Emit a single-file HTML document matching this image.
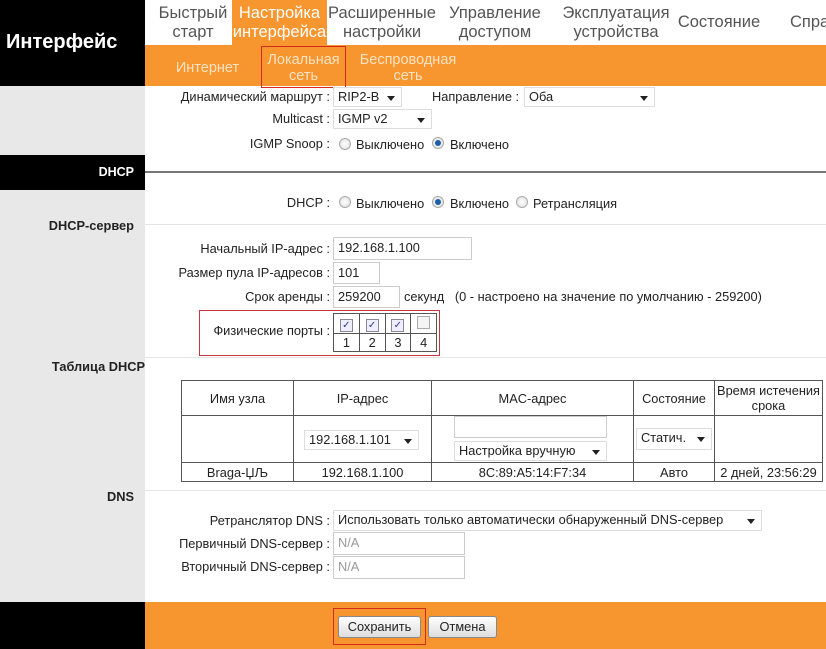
<!DOCTYPE html>
<html><head><meta charset="utf-8"><style>
*{margin:0;padding:0;box-sizing:border-box}
body{width:826px;height:649px;position:relative;overflow:hidden;background:#fff;font-family:"Liberation Sans",Arial,sans-serif;font-size:12.8px;color:#222}
.a{position:absolute}
.lbl{position:absolute;text-align:right;white-space:nowrap;line-height:14px}
.sel{position:absolute;border:1px solid #ddd;background:#fff;padding-left:4px;line-height:18px;font-size:12.8px;white-space:nowrap}
.sel:after{content:"";position:absolute;right:6px;top:8px;border-left:4px solid transparent;border-right:4px solid transparent;border-top:5px solid #222}
.inp{position:absolute;border:1px solid #ccc;background:#fff;padding-left:4px;line-height:20px;font-size:12.8px}
.rad{position:absolute;width:12px;height:12px;border-radius:50%;border:1px solid #aaa;background:radial-gradient(#fff,#ddd)}
.rad.on:after{content:"";position:absolute;left:2px;top:2px;width:6px;height:6px;border-radius:50%;background:#1a5fa8}
.nav{position:absolute;top:4px;text-align:center;font-size:16.5px;line-height:19px;color:#555;white-space:nowrap}
.sub{position:absolute;text-align:center;font-size:14.5px;line-height:16px;color:#fde3c4;white-space:nowrap}
table{border-collapse:collapse}
td{border:1px solid #555;text-align:center;font-size:12.8px}
.cb{display:inline-block;width:13px;height:13px;border:1px solid #889;background:#eef;font-size:10px;line-height:11px;color:#339}
</style></head><body>
<div class="a" style="left:0;top:0;width:145px;height:649px;background:#e8e8e8"></div>
<div class="a" style="left:0;top:0;width:145px;height:86px;background:#000"></div>
<div class="a" style="left:6px;top:31px;color:#fff;font-weight:bold;font-size:20px">Интерфейс</div>
<div class="a" style="left:0;top:155px;width:145px;height:35px;background:#000"></div>
<div class="a" style="left:0;top:165px;width:134px;text-align:right;color:#fff;font-weight:bold;font-size:12.5px">DHCP</div>
<div class="a" style="left:0;top:218px;width:134px;text-align:right;font-weight:bold">DHCP-сервер</div>
<div class="a" style="left:0;top:359px;width:145px;text-align:right;font-weight:bold">Таблица DHCP</div>
<div class="a" style="left:0;top:489px;width:134px;text-align:right;font-weight:bold">DNS</div>
<div class="a" style="left:0;top:602px;width:145px;height:47px;background:#000"></div>
<div class="a" style="left:145px;top:602px;width:681px;height:47px;background:#f7962f"></div>

<div class="a" style="left:145px;top:45px;width:681px;height:41px;background:#f7962f"></div>
<div class="a" style="left:232px;top:0;width:95px;height:45px;background:#f7962f"></div>
<div class="nav" style="left:155px;width:76px">Быстрый<br>старт</div>
<div class="nav" style="left:232px;width:95px;color:#fff">Настройка<br>интерфейса</div>
<div class="nav" style="left:327px;width:110px">Расширенные<br>настройки</div>
<div class="nav" style="left:445px;width:100px">Управление<br>доступом</div>
<div class="nav" style="left:560px;width:112px">Эксплуатация<br>устройства</div>
<div class="nav" style="left:676px;width:86px;top:13px">Состояние</div>
<div class="nav" style="left:790px;width:60px;top:13px;text-align:left">Справка</div>
<div class="sub" style="left:170px;width:75px;top:60px">Интернет</div>
<div class="sub" style="left:261px;width:85px;top:52px">Локальная<br>сеть</div>
<div class="a" style="left:261px;top:46px;width:85px;height:42px;border:1px solid #d42a1a"></div>
<div class="sub" style="left:358px;width:100px;top:52px">Беспроводная<br>сеть</div>

<div class="lbl" style="right:496px;top:90px">Динамический маршрут :</div>
<div class="sel" style="left:333px;top:87px;width:69px;height:20px">RIP2-B</div>
<div class="lbl" style="left:432px;top:90px">Направление :</div>
<div class="sel" style="left:524px;top:87px;width:131px;height:20px">Оба</div>
<div class="lbl" style="right:496px;top:112px">Multicast :</div>
<div class="sel" style="left:333px;top:109px;width:99px;height:20px">IGMP v2</div>
<div class="lbl" style="right:496px;top:137px">IGMP Snoop :</div>
<div class="rad" style="left:339px;top:138px"></div><div class="lbl" style="left:356px;top:138px">Выключено</div>
<div class="rad on" style="left:432px;top:137px"></div><div class="lbl" style="left:450px;top:138px">Включено</div>
<div class="a" style="left:145px;top:171px;width:681px;height:2px;background:#777"></div>

<div class="lbl" style="right:496px;top:196px">DHCP :</div>
<div class="rad" style="left:339px;top:196px"></div><div class="lbl" style="left:356px;top:197px">Выключено</div>
<div class="rad on" style="left:432px;top:196px"></div><div class="lbl" style="left:450px;top:197px">Включено</div>
<div class="rad" style="left:516px;top:196px"></div><div class="lbl" style="left:533px;top:197px">Ретрансляция</div>
<div class="a" style="left:145px;top:224px;width:681px;height:1px;background:#e4e4e4"></div>

<div class="lbl" style="right:496px;top:242px">Начальный IP-адрес :</div>
<div class="inp" style="left:333px;top:237px;width:139px;height:23px">192.168.1.100</div>
<div class="lbl" style="right:496px;top:266px">Размер пула IP-адресов :</div>
<div class="inp" style="left:333px;top:262px;width:47px;height:22px">101</div>
<div class="lbl" style="right:496px;top:290px">Срок аренды :</div>
<div class="inp" style="left:333px;top:286px;width:67px;height:22px">259200</div>
<div class="lbl" style="left:404px;top:290px">секунд &nbsp;&nbsp;(0 - настроено на значение по умолчанию - 259200)</div>
<div class="a" style="left:199px;top:310px;width:241px;height:46px;border:1px solid #c9353f"></div>
<div class="lbl" style="right:496px;top:324px">Физические порты :</div>
<table class="a" style="left:333px;top:313px;width:104px">
<tr style="height:20px"><td><span class="cb">✓</span></td><td><span class="cb">✓</span></td><td><span class="cb">✓</span></td><td><span class="cb" style="background:#f4f4f4;border-color:#aaa"></span></td></tr>
<tr style="height:18px"><td>1</td><td>2</td><td>3</td><td>4</td></tr></table>
<div class="a" style="left:145px;top:357px;width:681px;height:1px;background:#e4e4e4"></div>

<table class="a" style="left:181px;top:380px;width:642px">
<tr style="height:35px"><td style="width:112px">Имя узла</td><td style="width:138px">IP-адрес</td><td style="width:202px">MAC-адрес</td><td style="width:81px">Состояние</td><td style="line-height:15px">Время истечения срока</td></tr>
<tr style="height:47px"><td></td><td style="position:relative"><div class="sel" style="left:10px;top:14px;width:115px;height:20px;text-align:left">192.168.1.101</div></td>
<td style="position:relative"><div class="inp" style="left:22px;top:0px;width:153px;height:22px"></div><div class="sel" style="left:22px;top:25px;width:153px;height:20px;text-align:left">Настройка вручную</div></td>
<td style="position:relative"><div class="sel" style="left:2px;top:12px;width:76px;height:22px;text-align:left">Статич.</div></td><td></td></tr>
<tr style="height:19px"><td>Braga-ЏЉ</td><td>192.168.1.100</td><td>8C:89:A5:14:F7:34</td><td>Авто</td><td>2 дней, 23:56:29</td></tr></table>
<div class="a" style="left:145px;top:490px;width:681px;height:1px;background:#e4e4e4"></div>

<div class="lbl" style="right:496px;top:514px">Ретранслятор DNS :</div>
<div class="sel" style="left:333px;top:510px;width:429px;height:21px">Использовать только автоматически обнаруженный DNS-сервер</div>
<div class="lbl" style="right:496px;top:537px">Первичный DNS-сервер :</div>
<div class="inp" style="left:333px;top:532px;width:132px;height:23px;color:#999">N/A</div>
<div class="lbl" style="right:496px;top:560px">Вторичный DNS-сервер :</div>
<div class="inp" style="left:333px;top:556px;width:132px;height:23px;color:#999">N/A</div>

<div class="a" style="left:338px;top:616px;width:83px;height:22px;border:1px solid #888;border-radius:3px;background:linear-gradient(#fff,#ddd);text-align:center;line-height:20px">Сохранить</div>
<div class="a" style="left:333px;top:608px;width:93px;height:37px;border:1px solid #d42a1a"></div>
<div class="a" style="left:428px;top:616px;width:69px;height:22px;border:1px solid #888;border-radius:3px;background:linear-gradient(#fff,#ddd);text-align:center;line-height:20px">Отмена</div>
</body></html>
